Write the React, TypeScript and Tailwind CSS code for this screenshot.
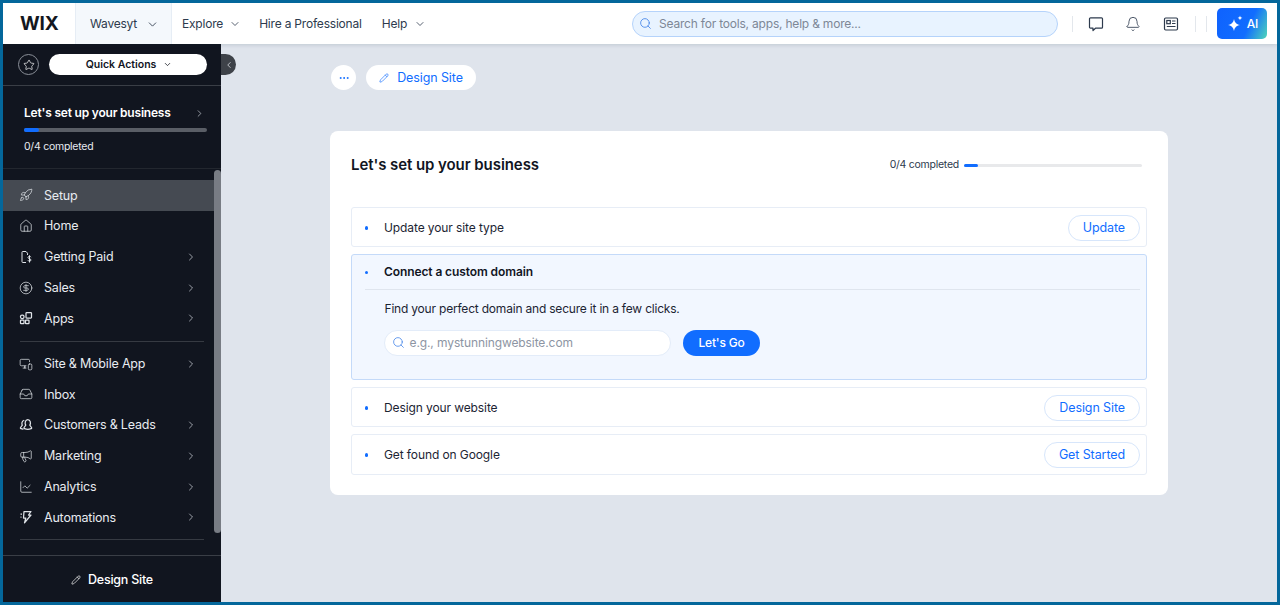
import {
  Bell,
  ChevronDown,
  ChevronLeft,
  ChevronRight,
  CircleDollarSign,
  Ellipsis,
  Home,
  Inbox,
  LineChart,
  Megaphone,
  MonitorSmartphone,
  Pencil,
  Rocket,
  Search,
  Star,
} from 'lucide-react'
import type { ComponentType } from 'react'

type IconProps = { size?: number; strokeWidth?: number; className?: string }

function PaidIcon({ size = 14, className }: IconProps) {
  return (
    <svg width={size} height={size} viewBox="0 0 14 14" fill="none" stroke="currentColor" strokeWidth={1} className={className}>
      <path d="M7 12.500H3.700a.7.7 0 0 1-.7-.7V2.200a.7.7 0 0 1 .7-.7h3.300L8.500 3.200V5" />
      <path d="M12 7.200c-.3-.6-.9-.9-1.500-.9-.8 0-1.500.5-1.500 1.200 0 1.600 3 .9 3 2.500 0 .7-.7 1.200-1.500 1.200-.7 0-1.300-.3-1.600-.9M10.500 5.300v7.200" />
    </svg>
  )
}

function AppsIcon({ size = 14, strokeWidth = 1.2, className }: IconProps) {
  return (
    <svg width={size} height={size} viewBox="0 0 14 14" fill="none" stroke="currentColor" strokeWidth={strokeWidth} className={className}>
      <rect x="1.500" y="4" width="3.500" height="3.500" rx="1.500" />
      <rect x="1.500" y="9" width="3.500" height="3.500" rx="0.600" />
      <rect x="6.500" y="9" width="3.500" height="3.500" rx="0.600" />
      <rect x="7" y="1.500" width="5.500" height="5.500" rx="0.800" />
    </svg>
  )
}

function CustomersIcon({ size = 14, strokeWidth = 1.1, className }: IconProps) {
  return (
    <svg width={size} height={size} viewBox="0 0 14 14" fill="none" stroke="currentColor" strokeWidth={strokeWidth} strokeLinejoin="round" strokeLinecap="round" className={className}>
      <path d="M6.800 7.200c-1.300-1.800-.6-5.700 2-5.700s3.300 3.900 2 5.700l1.700 2.300c.3.500.2 1-.4 1.200-2.200.8-4.400.8-6.600 0-.6-.2-.7-.7-.4-1.200z" />
      <path d="M4.800 2.500c-1.800.4-2.400 3-1.500 4.700L1.600 9.500c-.3.500-.2 1 .4 1.200.6.200 1.200.4 1.900.5" />
    </svg>
  )
}

function AutomationsIcon({ size = 14, strokeWidth = 1.1, className }: IconProps) {
  return (
    <svg width={size} height={size} viewBox="0 0 14 14" fill="none" stroke="currentColor" strokeWidth={strokeWidth} strokeLinejoin="round" className={className}>
      <path d="M5 1.500h7L9.500 5H12L5.500 12.800 6.800 8H4.500z" />
      <path d="M3 4H1.500M2.500 7H1.500" />
    </svg>
  )
}

function ChatIcon({ className }: { className?: string }) {
  return (
    <svg width="16" height="16" viewBox="0 0 16 16" fill="none" stroke="currentColor" strokeWidth="1.200" strokeLinejoin="round" className={className}>
      <path d="M2.500 1.800h11a1 1 0 0 1 1 1v8.400a1 1 0 0 1-1 1H7.500L5 14.500v-2.300H2.500a1 1 0 0 1-1-1V2.800a1 1 0 0 1 1-1z" />
    </svg>
  )
}

function NewsIcon({ className }: { className?: string }) {
  return (
    <svg width="16" height="16" viewBox="0 0 16 16" fill="none" stroke="currentColor" strokeWidth="1.200" className={className}>
      <rect x="1.500" y="2" width="13" height="12" rx="1.200" />
      <rect x="3.800" y="4.500" width="3.500" height="3.200" />
      <path d="M9 5h3.500M9 7.500h3.500M3.800 10.500h8.700" />
    </svg>
  )
}

function SparkIcon() {
  return (
    <svg width="19" height="20" viewBox="0 0 19 20" fill="white">
      <path d="M8 5c.8 3.700 2.300 5.200 6 6-3.700.8-5.200 2.300-6 6-.8-3.700-2.300-5.200-6-6 3.700-.8 5.200-2.300 6-6z" />
      <path d="M14 1.500c.3 1.500.9 2.100 2.400 2.400-1.500.3-2.100.9-2.400 2.400-.3-1.500-.9-2.100-2.400-2.400 1.500-.3 2.100-.9 2.400-2.400z" />
    </svg>
  )
}

interface NavItem {
  label: string
  icon: ComponentType<IconProps>
  arrow?: boolean
  active?: boolean
}

const NAV_TOP: NavItem[] = [
  { label: 'Setup', icon: Rocket, active: true },
  { label: 'Home', icon: Home },
  { label: 'Getting Paid', icon: PaidIcon, arrow: true },
  { label: 'Sales', icon: CircleDollarSign, arrow: true },
  { label: 'Apps', icon: AppsIcon, arrow: true },
]

const NAV_BOTTOM: NavItem[] = [
  { label: 'Site & Mobile App', icon: MonitorSmartphone, arrow: true },
  { label: 'Inbox', icon: Inbox },
  { label: 'Customers & Leads', icon: CustomersIcon, arrow: true },
  { label: 'Marketing', icon: Megaphone, arrow: true },
  { label: 'Analytics', icon: LineChart, arrow: true },
  { label: 'Automations', icon: AutomationsIcon, arrow: true },
]

function NavRow({ item }: { item: NavItem }) {
  const Icon = item.icon
  return (
    <div
      className={`flex h-[30.75px] items-center pl-[16px] pr-[24px] text-[12.5px] tracking-[-0.2px] text-[#e8ebf0] ${
        item.active ? 'bg-[#454a52]' : ''
      }`}
    >
      <Icon size={14} strokeWidth={1.25} className="shrink-0 text-[#dfe3e8]" />
      <span className="ml-[11px] flex-1 whitespace-nowrap pt-[1px] leading-none">{item.label}</span>
      {item.arrow && <ChevronRight size={12} strokeWidth={1.5} className="text-[#c9ced6]" />}
    </div>
  )
}

function TopBar() {
  return (
    <header className="relative z-10 flex h-[41px] shrink-0 items-center whitespace-nowrap bg-white text-[12px] tracking-[-0.2px] text-[#2d3a4d] shadow-[0_1px_4px_rgba(22,45,61,0.15)]">
      <div className="flex h-full w-[72px] items-center pl-[17px]">
        <span className="text-[19px] font-bold leading-none tracking-[-0.2px] text-[#131720]">WIX</span>
      </div>
      <div className="flex h-full w-[97px] items-center border-x border-[#e6edf5] bg-[#f4f8fc] pl-[14px] pt-[1px]">
        <span>Wavesyt</span>
        <ChevronDown size={13} strokeWidth={1.6} className="ml-[9px]" />
      </div>
      <div className="flex h-full w-[460px] shrink-0 items-center pl-[10px] pt-[1px]">
        <span>Explore</span>
        <ChevronDown size={12} strokeWidth={1.6} className="ml-[6px]" />
        <span className="ml-[18px]">Hire a Professional</span>
        <span className="ml-[20px]">Help</span>
        <ChevronDown size={12} strokeWidth={1.6} className="ml-[7px]" />
      </div>
      <div className="flex h-[26px] w-[426px] shrink-0 items-center rounded-full border border-[#b5d3fb] bg-[#e8f3ff] pl-[6px] text-[#7d8796]">
        <Search size={13} strokeWidth={1.5} className="text-[#3d80e8]" />
        <span className="ml-[7px] pt-[1px]">Search for tools, apps, help &amp; more...</span>
      </div>
      <div className="ml-[14px] h-[16px] w-px bg-[#e3e7ec]" />
      <ChatIcon className="ml-[15px] text-[#2d3a4d]" />
      <Bell size={16} strokeWidth={1.25} className="ml-[21px] text-[#2d3a4d]" />
      <NewsIcon className="ml-[22px] text-[#2d3a4d]" />
      <div className="ml-[16px] h-[16px] w-px bg-[#e3e7ec]" />
      <div className="ml-[10px] h-[16px] w-px bg-[#e3e7ec]" />
      <div className="ml-[10px] flex h-[31px] w-[50px] items-center justify-center gap-[2px] rounded-[5px] bg-[linear-gradient(115deg,#0f62fe_0%,#116dff_62%,#4fd6b8_100%)] text-[12px] font-medium text-white">
        <SparkIcon />
        <span>AI</span>
      </div>
    </header>
  )
}

function Sidebar() {
  return (
    <aside className="relative flex w-[218px] shrink-0 flex-col bg-[#11151f] text-white">
      <div className="flex h-[42px] shrink-0 items-center border-b border-[#3a3e46] pl-[15px]">
        <div className="flex h-[21px] w-[21px] items-center justify-center rounded-full border border-[#8a8f98]">
          <Star size={12} strokeWidth={1.4} />
        </div>
        <div className="ml-[10px] flex h-[21px] w-[158px] items-center justify-center gap-[7px] rounded-full bg-white pl-[2px] text-[10.5px] font-semibold text-[#11151f]">
          <span>Quick Actions</span>
          <ChevronDown size={9} strokeWidth={2} />
        </div>
      </div>
      <div className="h-[83px] shrink-0 border-b border-[#23272f] pl-[21px] pr-[14px] pt-[19px]">
        <div className="flex items-center justify-between">
          <span className="text-[12px] font-semibold leading-[16px] tracking-[-0.2px]">Let's set up your business</span>
          <ChevronRight size={11} strokeWidth={1.5} className="mr-[2px] text-[#c9ced6]" />
        </div>
        <div className="mt-[7px] h-[4px] w-[183px] rounded-full bg-[#5a5e66]">
          <div className="h-full w-[15px] rounded-full bg-[#116dff]" />
        </div>
        <p className="mt-[8px] text-[10.5px] leading-[14px] tracking-[-0.25px] text-[#e8ebf0]">0/4 completed</p>
      </div>
      <nav className="mt-[11px] flex-1 overflow-hidden">
        {NAV_TOP.map((item) => (
          <NavRow key={item.label} item={item} />
        ))}
        <div className="mx-[17px] mb-[6.5px] mt-[7px] h-px bg-[#363a42]" />
        {NAV_BOTTOM.map((item) => (
          <NavRow key={item.label} item={item} />
        ))}
        <div className="mx-[17px] mt-[6px] h-px bg-[#363a42]" />
      </nav>
      <div className="flex h-[47px] shrink-0 items-center justify-center gap-[7px] border-t border-[#3a3e46] pt-[2px] text-[12.5px] font-medium tracking-[-0.25px]">
        <Pencil size={10} strokeWidth={1.6} />
        <span>Design Site</span>
      </div>
      {/* scroll thumb */}
      <div className="absolute right-0 top-[126px] h-[363px] w-[7px] rounded-full bg-[#787c84]" />
      {/* collapse handle */}
      <div className="absolute left-[218px] top-[10px] flex h-[21px] w-[15px] items-center justify-center rounded-r-full bg-[#3e4249]">
        <ChevronLeft size={10} strokeWidth={1.8} className="text-[#dfe3e8]" />
      </div>
    </aside>
  )
}

function TaskRow({ label, action, tall }: { label: string; action: string; tall?: boolean }) {
  return (
    <div
      className={`flex items-center rounded-[3px] border border-[#e7edf6] pl-[12.5px] pr-[6px] pt-[2px] ${
        tall ? 'h-[41px]' : 'h-[40.5px]'
      }`}
    >
      <span className="h-[3.5px] w-[3.5px] rounded-full bg-[#116dff]" />
      <span className="ml-[16px] flex-1 text-[12px] tracking-[-0.1px] text-[#1c2433]">{label}</span>
      <button className="h-[26px] rounded-full border border-[#d7e6fb] bg-white px-[14px] pt-[1px] text-[12.5px] tracking-[-0.1px] text-[#116dff]">
        {action}
      </button>
    </div>
  )
}

function SetupCard() {
  return (
    <section className="ml-[-1px] mt-[41px] w-[838px] rounded-[8px] bg-white pb-[20px] pl-[21px] pr-[21px] pt-[23.5px]">
      <div className="flex h-[21px] items-center">
        <h2 className="flex-1 text-[15px] font-semibold tracking-[-0.07px] text-[#11151f]">Let's set up your business</h2>
        <span className="text-[10.5px] tracking-[-0.25px] text-[#2d3a4d]">0/4 completed</span>
        <div className="ml-[5px] mr-[5px] h-[3px] w-[178px] rounded-full bg-[#e8e9eb]">
          <div className="h-full w-[14px] rounded-full bg-[#116dff]" />
        </div>
      </div>
      <div className="mt-[31px] flex flex-col gap-[6.5px]">
        <TaskRow label="Update your site type" action="Update" />
        <div className="h-[126.5px] rounded-[3px] border border-[#c4daf9] bg-[#f2f7ff] pl-[12.5px] pr-[6px]">
          <div className="flex h-[35.5px] items-center border-b border-[#dfe5ee] pt-[1px]">
            <span className="h-[3.5px] w-[3.5px] rounded-full bg-[#116dff]" />
            <span className="ml-[16px] text-[12px] font-semibold tracking-[-0.1px] text-[#11151f]">Connect a custom domain</span>
          </div>
          <p className="ml-[20px] mt-[11px] text-[12px] leading-[16px] tracking-[-0.2px] text-[#1c2433]">
            Find your perfect domain and secure it in a few clicks.
          </p>
          <div className="ml-[19px] mt-[12.5px] flex items-center">
            <div className="flex h-[26px] w-[287px] items-center rounded-full border border-[#e3ecf9] bg-white pl-[7px] text-[12px] tracking-[-0.1px] text-[#8d95a3]">
              <Search size={13} strokeWidth={1.4} className="text-[#3d80e8]" />
              <span className="ml-[5px] pt-[1px]">e.g., mystunningwebsite.com</span>
            </div>
            <button className="ml-[12.5px] h-[26px] w-[77px] rounded-full bg-[#116dff] pt-[1px] text-[12px] font-medium tracking-[-0.2px] text-white">
              Let's Go
            </button>
          </div>
        </div>
        <TaskRow label="Design your website" action="Design Site" />
        <TaskRow label="Get found on Google" action="Get Started" tall />
      </div>
    </section>
  )
}

export default function App() {
  return (
    <div className="flex h-[605px] w-[1280px] flex-col overflow-hidden border-[3px] border-[#04679b] bg-[#dfe4ec] font-['Inter',sans-serif]">
      <TopBar />
      <div className="flex min-h-0 flex-1">
        <Sidebar />
        <main className="flex-1 pl-[110px] pt-[21px]">
          <div className="flex items-center gap-[10px]">
            <button className="flex h-[25px] w-[25px] items-center justify-center rounded-full bg-white text-[#116dff]">
              <Ellipsis size={12} strokeWidth={2} />
            </button>
            <button className="flex h-[25px] w-[110px] items-center justify-center gap-[8px] rounded-full bg-white pt-[1px] text-[12.5px] tracking-[-0.1px] text-[#116dff]">
              <Pencil size={10} strokeWidth={1.5} />
              <span>Design Site</span>
            </button>
          </div>
          <SetupCard />
        </main>
      </div>
    </div>
  )
}
